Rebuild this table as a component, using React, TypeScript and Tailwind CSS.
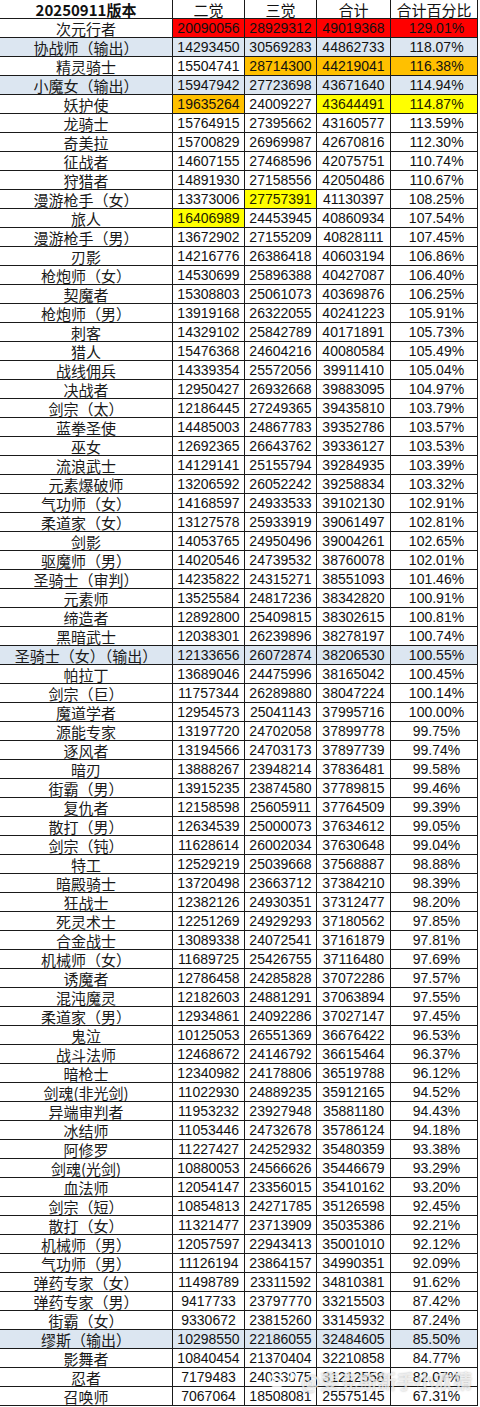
import React from "react";

type Row = [string, string, string, string, string, string?];
const rows: Row[] = [
  ["次元行者", "20090056", "28929312", "49019368", "129.01%", "red"],
  ["协战师（输出）", "14293450", "30569283", "44862733", "118.07%", "blue"],
  ["精灵骑士", "15504741", "28714300", "44219041", "116.38%", "jl"],
  ["小魔女（输出）", "15947942", "27723698", "43671640", "114.94%", "blue"],
  ["妖护使", "19635264", "24009227", "43644491", "114.87%", "yh"],
  ["龙骑士", "15764915", "27395662", "43160577", "113.59%"],
  ["奇美拉", "15700829", "26969987", "42670816", "112.30%"],
  ["征战者", "14607155", "27468596", "42075751", "110.74%"],
  ["狩猎者", "14891930", "27158556", "42050486", "110.67%"],
  ["漫游枪手（女）", "13373006", "27757391", "41130397", "108.25%", "my"],
  ["旅人", "16406989", "24453945", "40860934", "107.54%", "lr"],
  ["漫游枪手（男）", "13672902", "27155209", "40828111", "107.45%"],
  ["刃影", "14216776", "26386418", "40603194", "106.86%"],
  ["枪炮师（女）", "14530699", "25896388", "40427087", "106.40%"],
  ["契魔者", "15308803", "25061073", "40369876", "106.25%"],
  ["枪炮师（男）", "13919168", "26322055", "40241223", "105.91%"],
  ["刺客", "14329102", "25842789", "40171891", "105.73%"],
  ["猎人", "15476368", "24604216", "40080584", "105.49%"],
  ["战线佣兵", "14339354", "25572056", "39911410", "105.04%"],
  ["决战者", "12950427", "26932668", "39883095", "104.97%"],
  ["剑宗（太）", "12186445", "27249365", "39435810", "103.79%"],
  ["蓝拳圣使", "14485003", "24867783", "39352786", "103.57%"],
  ["巫女", "12692365", "26643762", "39336127", "103.53%"],
  ["流浪武士", "14129141", "25155794", "39284935", "103.39%"],
  ["元素爆破师", "13206592", "26052242", "39258834", "103.32%"],
  ["气功师（女）", "14168597", "24933533", "39102130", "102.91%"],
  ["柔道家（女）", "13127578", "25933919", "39061497", "102.81%"],
  ["剑影", "14053765", "24950496", "39004261", "102.65%"],
  ["驱魔师（男）", "14020546", "24739532", "38760078", "102.01%"],
  ["圣骑士（审判）", "14235822", "24315271", "38551093", "101.46%"],
  ["元素师", "13525584", "24817236", "38342820", "100.91%"],
  ["缔造者", "12892800", "25409815", "38302615", "100.81%"],
  ["黑暗武士", "12038301", "26239896", "38278197", "100.74%"],
  ["圣骑士（女）（输出）", "12133656", "26072874", "38206530", "100.55%", "blue"],
  ["帕拉丁", "13689046", "24475996", "38165042", "100.45%"],
  ["剑宗（巨）", "11757344", "26289880", "38047224", "100.14%"],
  ["魔道学者", "12954573", "25041143", "37995716", "100.00%"],
  ["源能专家", "13197720", "24702058", "37899778", "99.75%"],
  ["逐风者", "13194566", "24703173", "37897739", "99.74%"],
  ["暗刃", "13888267", "23948214", "37836481", "99.58%"],
  ["街霸（男）", "13915235", "23874580", "37789815", "99.46%"],
  ["复仇者", "12158598", "25605911", "37764509", "99.39%"],
  ["散打（男）", "12634539", "25000073", "37634612", "99.05%"],
  ["剑宗（钝）", "11628614", "26002034", "37630648", "99.04%"],
  ["特工", "12529219", "25039668", "37568887", "98.88%"],
  ["暗殿骑士", "13720498", "23663712", "37384210", "98.39%"],
  ["狂战士", "12382126", "24930351", "37312477", "98.20%"],
  ["死灵术士", "12251269", "24929293", "37180562", "97.85%"],
  ["合金战士", "13089338", "24072541", "37161879", "97.81%"],
  ["机械师（女）", "11689725", "25426755", "37116480", "97.69%"],
  ["诱魔者", "12786458", "24285828", "37072286", "97.57%"],
  ["混沌魔灵", "12182603", "24881291", "37063894", "97.55%"],
  ["柔道家（男）", "12934861", "24092286", "37027147", "97.45%"],
  ["鬼泣", "10125053", "26551369", "36676422", "96.53%"],
  ["战斗法师", "12468672", "24146792", "36615464", "96.37%"],
  ["暗枪士", "12340982", "24178806", "36519788", "96.12%"],
  ["剑魂(非光剑)", "11022930", "24889235", "35912165", "94.52%"],
  ["异端审判者", "11953232", "23927948", "35881180", "94.43%"],
  ["冰结师", "11053446", "24732678", "35786124", "94.18%"],
  ["阿修罗", "11227427", "24252932", "35480359", "93.38%"],
  ["剑魂(光剑)", "10880053", "24566626", "35446679", "93.29%"],
  ["血法师", "12054147", "23356015", "35410162", "93.20%"],
  ["剑宗（短）", "10854813", "24271785", "35126598", "92.45%"],
  ["散打（女）", "11321477", "23713909", "35035386", "92.21%"],
  ["机械师（男）", "12057597", "22943413", "35001010", "92.12%"],
  ["气功师（男）", "11126194", "23864157", "34990351", "92.09%"],
  ["弹药专家（女）", "11498789", "23311592", "34810381", "91.62%"],
  ["弹药专家（男）", "9417733", "23797770", "33215503", "87.42%"],
  ["街霸（女）", "9330672", "23815260", "33145932", "87.24%"],
  ["缪斯（输出）", "10298550", "22186055", "32484605", "85.50%", "blue"],
  ["影舞者", "10840454", "21370404", "32210858", "84.77%"],
  ["忍者", "7179483", "24033075", "31212558", "82.07%"],
  ["召唤师", "7067064", "18508081", "25575145", "67.31%"],
];

const RED = "bg-[#ff0000] text-[#8a0a0a]";
const ORANGE = "bg-[#ffc000] text-[#3a2a00]";
const YELLOW = "bg-[#ffff00] text-[#222200]";

function cellBg(kind: string | undefined, col: number): string {
  switch (kind) {
    case "red":
      return col >= 1 ? RED : "";
    case "blue":
      return "bg-[#dce6f1]";
    case "jl":
      return col >= 2 ? ORANGE : "";
    case "yh":
      return col === 1 ? ORANGE : col >= 3 ? YELLOW : "";
    case "my":
      return col === 2 ? YELLOW : "";
    case "lr":
      return col === 1 ? YELLOW : "";
    default:
      return "";
  }
}

const widths = ["w-[173px]", "w-[72px]", "w-[72px]", "w-[74px]", "w-[87px]"];
const CJK = "font-['Noto_Sans_CJK_SC','Liberation_Sans',sans-serif]";
const NUM = "font-['Liberation_Sans','Noto_Sans_CJK_SC',sans-serif]";

export default function App() {
  const header = ["20250911版本", "二觉", "三觉", "合计", "合计百分比"];
  return (
    <div className="relative w-[480px] h-[1407px] bg-white overflow-hidden">
      <div className="flex flex-col">
        <div className="flex h-[19px]">
          {header.map((h, i) => (
            <div
              key={i}
              className={`${widths[i]} h-[19px] shrink-0 border-r border-b border-[#1a1a1a] flex items-center justify-center text-[15px] leading-none text-[#111] ${CJK} ${
                i === 0 ? "font-bold" : "font-normal"
              }`}
            >
              {h}
            </div>
          ))}
        </div>
        {rows.map((r, ri) => (
          <div key={ri} className="flex h-[19px]">
            {r.slice(0, 5).map((v, ci) => (
              <div
                key={ci}
                className={`${widths[ci]} h-[19px] shrink-0 border-r border-b border-[#1a1a1a] flex items-center justify-center leading-none ${
                  ci === 0 ? `${CJK} text-[15px] text-[#1a1a1a]` : `${NUM} text-[14px] text-[#111]`
                } ${ci === 4 ? "pl-[5px]" : ""} ${cellBg(r[5], ci)}`}
              >
                {v}
              </div>
            ))}
          </div>
        ))}
      </div>
      <div className="absolute left-[268px] top-[1370px] flex items-center gap-[3px] [text-shadow:0_0_2px_rgba(0,0,0,0.3)]">
        <svg width="30" height="20" viewBox="0 0 34 22" fill="none" stroke="rgba(255,255,255,0.8)" strokeWidth="2.4">
          <ellipse cx="10" cy="12" rx="8" ry="7" />
          <circle cx="10" cy="13" r="3" />
          <path d="M20 6 a6 6 0 0 1 6 6" />
          <path d="M22 2 a10 10 0 0 1 10 10" />
        </svg>
        <span className={`${CJK} text-[19px] leading-none font-bold text-white/70 whitespace-nowrap`}>@斐克斯新手小欢猜</span>
      </div>
    </div>
  );
}
